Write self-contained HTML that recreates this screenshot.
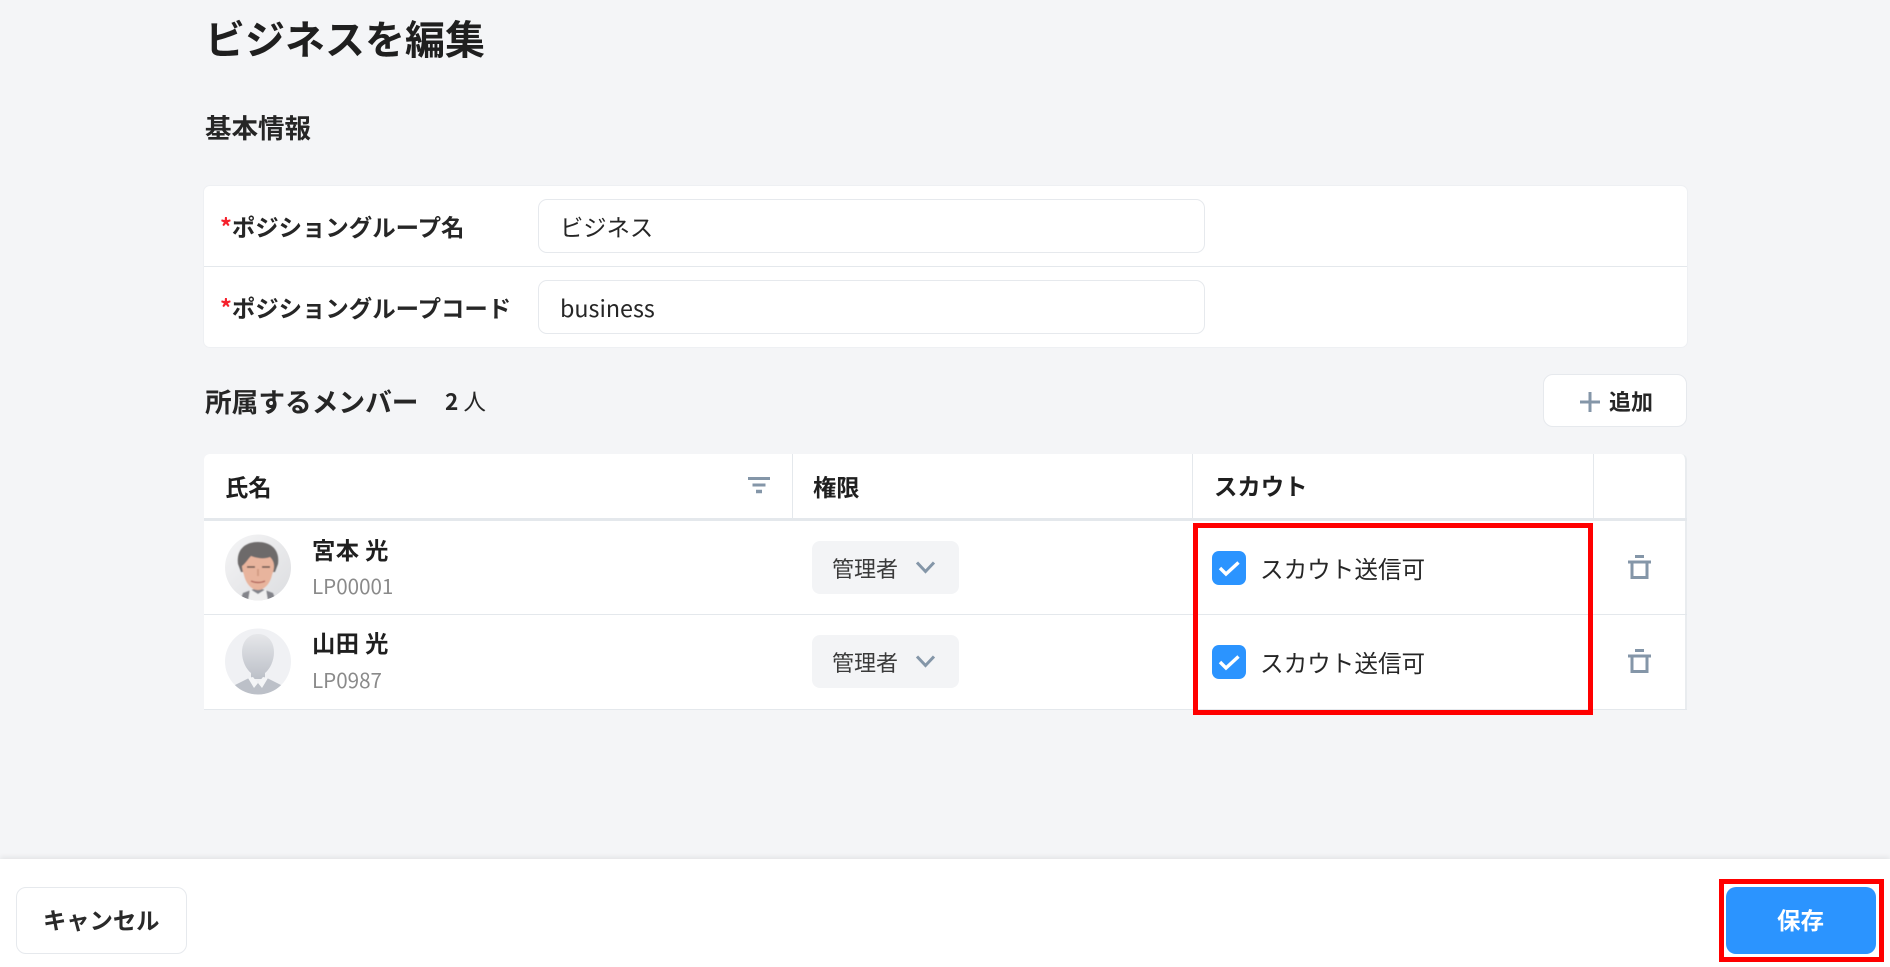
<!DOCTYPE html>
<html lang="ja"><head><meta charset="utf-8"><title>ビジネスを編集</title>
<style>
html,body{margin:0;padding:0;width:1890px;height:967px;overflow:hidden;background:#f4f5f7}
body{font-family:"Liberation Sans","Noto Sans CJK JP",sans-serif;position:relative;color:#1f1f1f}
.a{position:absolute}
.t{position:absolute;white-space:nowrap;font-family:"Noto Sans CJK JP",sans-serif;line-height:40px;height:40px}
.b{font-weight:700}
.box{position:absolute;box-sizing:border-box;background:#fff;border:1px solid #e6e9ed}
</style></head><body>
<div class="t b" style="left:205px;top:17px;font-size:40px;">ビジネスを編集</div>
<div class="t b" style="left:205px;top:107px;font-size:26.5px;color:#262626">基本情報</div>

<div class="a" style="left:204px;top:186px;width:1483px;height:161px;background:#fff;border-radius:6px;box-shadow:0 0 0 1px #eef0f3"></div>
<div class="a" style="left:204px;top:266px;width:1483px;height:1px;background:#e4e8ec"></div>
<div class="t b" style="left:220px;top:206px;font-size:23.4px;color:#262626"><span style="color:#f5222d">*</span>ポジショングループ名</div>
<div class="t b" style="left:220px;top:287px;font-size:23.4px;color:#262626"><span style="color:#f5222d">*</span>ポジショングループコード</div>
<div class="box" style="left:538px;top:199px;width:667px;height:54px;border-radius:9px"></div>
<div class="box" style="left:538px;top:280px;width:667px;height:54px;border-radius:9px"></div>
<div class="t" style="left:560px;top:206px;font-size:23.3px;color:#262626">ビジネス</div>
<div class="t" style="left:560px;top:287px;font-size:23.3px;color:#262626">business</div>

<div class="t b" style="left:205px;top:381px;font-size:26.7px;color:#262626">所属するメンバー</div>
<div class="t" style="left:445px;top:381px;font-size:22.6px;color:#262626"><span class="b">2</span> 人</div>
<div class="box" style="left:1543px;top:374px;width:144px;height:53px;border-radius:10px"></div>
<svg class="a" style="left:1579px;top:391px" width="22" height="22" viewBox="0 0 22 22"><path d="M11 1v20M1 11h20" stroke="#8496a8" stroke-width="3" fill="none"/></svg>
<div class="t b" style="left:1609px;top:381px;font-size:22px;color:#262626">追加</div>

<div class="a" style="left:204px;top:454px;width:1483px;height:255px;background:#fff;border-radius:6px 6px 0 0;border-right:2px solid #e9ecef;box-sizing:border-box"></div>
<div class="a" style="left:204px;top:518px;width:1483px;height:3px;background:#e4e8ec"></div>
<div class="a" style="left:204px;top:614px;width:1483px;height:1px;background:#e4e8ec"></div>
<div class="a" style="left:204px;top:709px;width:1483px;height:1px;background:#e4e8ec"></div>
<div class="a" style="left:792px;top:454px;width:1px;height:64px;background:#e4e8ec"></div>
<div class="a" style="left:1192px;top:454px;width:1px;height:64px;background:#e4e8ec"></div>
<div class="a" style="left:1593px;top:454px;width:1px;height:64px;background:#e4e8ec"></div>
<div class="t b" style="left:225px;top:466px;font-size:23.3px">氏名</div>
<div class="t b" style="left:813px;top:466px;font-size:23.3px">権限</div>
<div class="t b" style="left:1214px;top:465px;font-size:23.4px">スカウト</div>
<svg class="a" style="left:747px;top:476px" width="24" height="18" viewBox="0 0 24 18"><path d="M1 2.500h22M5.500 9h13" stroke="#8496a8" stroke-width="3" fill="none"/><path d="M9 15.500h6" stroke="#8496a8" stroke-width="3.500" fill="none"/></svg>

<!-- avatars -->
<svg class="a" style="left:225px;top:534px" width="66" height="67" viewBox="0 0 66 67">
<defs><clipPath id="c1"><circle cx="33" cy="33.500" r="33"/></clipPath><linearGradient id="g1" x1="0" y1="0" x2="1" y2="1"><stop offset="0" stop-color="#f5f5f6"/><stop offset="1" stop-color="#dcdde0"/></linearGradient><filter id="f1" x="-10%" y="-10%" width="120%" height="120%"><feGaussianBlur stdDeviation=".5"/></filter></defs>
<circle cx="33" cy="33.500" r="33" fill="url(#g1)"/>
<g clip-path="url(#c1)"><g filter="url(#f1)">
<path d="M15 67l3-8 11-4h8l11 4 3 8z" fill="#83848a"/><path d="M25 55l8 5 8-5 2 12H23z" fill="#efefef"/>
<path d="M13 30C11 15 21 8 33 8s22 7 20 22l-3 8H16z" fill="#6d6a6b"/>
<path d="M17 32c3-2 6-7 9-10 8 3 14 3 19 1 3 3 4 6 4 9 0 4-1 6-2 9-2 9-8 15-14 15s-12-6-14-15c-1-3-2-6-2-9z" fill="#e8b49d"/>
<path d="M22 33h8M37 33h8" stroke="#63504a" stroke-width="1.500"/><path d="M26 47c4 2 10 2 14 0" stroke="#b4695f" stroke-width="1.500" fill="none"/><path d="M33 35v7" stroke="#d39c84" stroke-width="2"/>
</g></g></svg>
<svg class="a" style="left:225px;top:628px" width="66" height="67" viewBox="0 0 66 67">
<defs><clipPath id="c2"><circle cx="33" cy="33.500" r="33"/></clipPath><linearGradient id="g2" x1="0" y1="0" x2="0" y2="1"><stop offset="0" stop-color="#e6e7ea"/><stop offset="1" stop-color="#bcc0c8"/></linearGradient></defs>
<circle cx="33" cy="33.500" r="33" fill="#f0f1f4"/>
<g clip-path="url(#c2)">
<path d="M33 6c10 0 16 8 16 18 0 9-4 17-9 21v6H26v-6c-5-4-9-12-9-21 0-10 6-18 16-18z" fill="url(#g2)"/>
<path d="M8 58l16-8 9 5 9-5 16 8v10H8z" fill="#bcc0c8"/>
<path d="M23 50l5-1 5 6-4 5zM43 50l-5-1-5 6 4 5z" fill="#f4f5f7"/>
</g></svg>

<div class="t b" style="left:312px;top:529px;font-size:23.3px;letter-spacing:.4px">宮本 光</div>
<div class="t" style="left:312px;top:565px;font-size:20.6px;color:#8a8a8a">LP00001</div>
<div class="t b" style="left:312px;top:622px;font-size:23.3px;letter-spacing:.4px">山田 光</div>
<div class="t" style="left:312px;top:659px;font-size:20.6px;color:#8a8a8a">LP0987</div>

<div class="a" style="left:812px;top:541px;width:147px;height:53px;background:#f3f4f6;border-radius:8px"></div>
<div class="a" style="left:812px;top:635px;width:147px;height:53px;background:#f3f4f6;border-radius:8px"></div>
<div class="t" style="left:832px;top:548px;font-size:22px;color:#3a3a3a">管理者</div>
<div class="t" style="left:832px;top:642px;font-size:22px;color:#3a3a3a">管理者</div>
<svg class="a" style="left:915px;top:559px" width="21" height="16" viewBox="0 0 21 16"><path d="M2 3.500l8.500 9 8.500-9" stroke="#8496a8" stroke-width="3" fill="none"/></svg>
<svg class="a" style="left:915px;top:653px" width="21" height="16" viewBox="0 0 21 16"><path d="M2 3.500l8.500 9 8.500-9" stroke="#8496a8" stroke-width="3" fill="none"/></svg>

<svg class="a" style="left:1212px;top:551px" width="34" height="34" viewBox="0 0 34 34"><rect width="34" height="34" rx="7" fill="#2b94ff"/><path d="M8 17l6 6L26.500 11.500" stroke="#fff" stroke-width="3.400" fill="none"/></svg>
<svg class="a" style="left:1212px;top:645px" width="34" height="34" viewBox="0 0 34 34"><rect width="34" height="34" rx="7" fill="#2b94ff"/><path d="M8 17l6 6L26.500 11.500" stroke="#fff" stroke-width="3.400" fill="none"/></svg>
<div class="t" style="left:1260px;top:548px;font-size:23.6px;color:#262626">スカウト送信可</div>
<div class="t" style="left:1260px;top:642px;font-size:23.6px;color:#262626">スカウト送信可</div>

<svg class="a" style="left:1627px;top:554px" width="25" height="26" viewBox="0 0 25 26"><path d="M8 2.500h9M1 8h23" stroke="#8496a8" stroke-width="3" fill="none"/><path d="M5 8v15.500h15V8" stroke="#8496a8" stroke-width="3" fill="none"/></svg>
<svg class="a" style="left:1627px;top:648px" width="25" height="26" viewBox="0 0 25 26"><path d="M8 2.500h9M1 8h23" stroke="#8496a8" stroke-width="3" fill="none"/><path d="M5 8v15.500h15V8" stroke="#8496a8" stroke-width="3" fill="none"/></svg>

<div class="a" style="left:1193px;top:523px;width:400px;height:192px;box-sizing:border-box;border:5px solid #ff0000"></div>

<!-- footer -->
<div class="a" style="left:0;top:859px;width:1890px;height:108px;background:#fff;box-shadow:0 -2px 5px rgba(0,0,0,.07)"></div>
<div class="box" style="left:16px;top:887px;width:171px;height:67px;border-radius:10px"></div>
<div class="t b" style="left:43px;top:899px;font-size:23.3px;color:#2a2a2a">キャンセル</div>
<div class="a" style="left:1719px;top:879px;width:165px;height:83px;box-sizing:border-box;border:5px solid #ff0000"></div>
<div class="a" style="left:1726px;top:887px;width:150px;height:67px;background:#2b94ff;border-radius:10px"></div>
<div class="t b" style="left:1777px;top:899px;font-size:23.5px;color:#fff">保存</div>
</body></html>
